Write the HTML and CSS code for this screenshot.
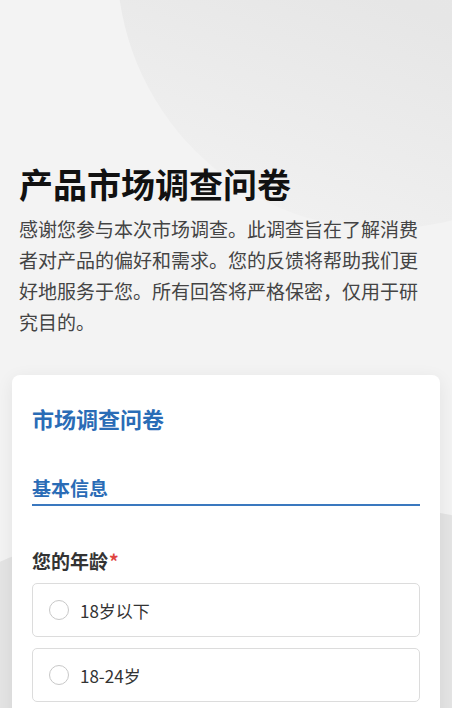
FILE: index.html
```html
<!DOCTYPE html>
<html lang="zh-CN">
<head>
    <meta charset="UTF-8">
    <meta name="viewport" content="width=device-width, initial-scale=1.0">
    <title>产品市场调查问卷</title>
    <link rel="stylesheet" href="styles.css">
</head>
<body>
    <div class="page">
        <div class="bubble bubble-top"></div>
        <div class="bubble bubble-bottom"></div>

        <header class="intro">
            <h1 class="intro-title">产品市场调查问卷</h1>
            <p class="intro-text">感谢您参与本次市场调查。此调查旨在了解消费者对产品的偏好和需求。您的反馈将帮助我们更好地服务于您。所有回答将严格保密，仅用于研究目的。</p>
        </header>

        <form class="survey-card">
            <h2 class="survey-title">市场调查问卷</h2>

            <h3 class="section-title">基本信息</h3>

            <div class="question">
                <div class="question-label">您的年龄<span class="required">*</span></div>
                <label class="option">
                    <input type="radio" name="age" value="under18">
                    <span class="radio"></span>
                    <span class="option-text">18岁以下</span>
                </label>
                <label class="option">
                    <input type="radio" name="age" value="18-24">
                    <span class="radio"></span>
                    <span class="option-text">18-24岁</span>
                </label>
            </div>
        </form>
    </div>
</body>
</html>
```

FILE: styles.css
```css
* {
    box-sizing: border-box;
}

body {
    margin: 0;
    background-color: #f3f3f3;
    font-family: "Noto Sans CJK SC", "Noto Sans", sans-serif;
    color: #333;
}

.page {
    position: relative;
    overflow: hidden;
    min-height: 708px;
    padding: 0 12px 6px;
}

/* decorative background circles */
.bubble {
    position: absolute;
    border-radius: 50%;
    z-index: 0;
}

.bubble-top {
    left: 117px;
    top: -305px;
    width: 534px;
    height: 534px;
    background: linear-gradient(200deg, #e9e9e9 0%, #e6e6e6 55%, rgba(243, 243, 243, 0) 100%);
}

.bubble-bottom {
    left: -460px;
    top: 500px;
    width: 1520px;
    height: 1520px;
    background-color: #e4e4e4;
}

.intro {
    position: relative;
    z-index: 1;
    padding: 164px 7px 0;
}

.intro-title {
    margin: 0;
    font-size: 34px;
    line-height: 40px;
    font-weight: 700;
    color: #111;
}

.intro-text {
    margin: 9px 0 0;
    font-size: 19px;
    line-height: 31px;
    color: #444;
}

.survey-card {
    position: relative;
    z-index: 1;
    margin-top: 38px;
    background-color: #fff;
    border-radius: 8px;
    box-shadow: 0 4px 18px rgba(0, 0, 0, 0.07);
    padding: 27px 20px 20px;
}

.survey-title {
    margin: 0;
    font-size: 22px;
    line-height: 32px;
    font-weight: 700;
    color: #2a6cb6;
}

.section-title {
    margin: 40px 0 0;
    padding-bottom: 3px;
    font-size: 19px;
    line-height: 27px;
    font-weight: 700;
    color: #2a6cb6;
    border-bottom: 2px solid #3a78bf;
}

.question {
    margin-top: 41px;
}

.question-label {
    font-size: 19px;
    line-height: 27px;
    font-weight: 700;
    color: #333;
    margin-bottom: 9px;
}

.required {
    color: #e0453f;
    margin-left: 1px;
}

.option {
    display: flex;
    align-items: center;
    gap: 11px;
    height: 54px;
    padding: 0 16px;
    margin-bottom: 11px;
    border: 1px solid #dcdcdc;
    border-radius: 5px;
    cursor: pointer;
}

.option input {
    display: none;
}

.radio {
    width: 20px;
    height: 20px;
    border: 1px solid #c8c8c8;
    border-radius: 50%;
    flex-shrink: 0;
}

.option input:checked + .radio {
    border: 6px solid #2a6cb6;
}

.option-text {
    font-size: 17px;
    color: #333;
}
```
